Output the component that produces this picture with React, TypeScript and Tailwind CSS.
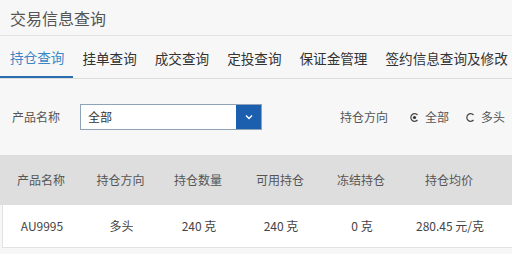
const tabs = ['持仓查询', '挂单查询', '成交查询', '定投查询', '保证金管理', '签约信息查询及修改'];

const cols = [
  { label: '产品名称', w: 'w-[82px]' },
  { label: '持仓方向', w: 'w-[77px]' },
  { label: '持仓数量', w: 'w-[78px]' },
  { label: '可用持仓', w: 'w-[86px]' },
  { label: '冻结持仓', w: 'w-[76px]' },
  { label: '持仓均价', w: 'w-[100px]' },
];

const row = ['AU9995', '多头', '240 克', '240 克', '0 克', '280.45 元/克'];

function Radio({ checked }: { checked?: boolean }) {
  return (
    <svg width="9" height="9" viewBox="0 0 9 9" className="shrink-0">
      <path d="M7.5 2 A3.8 3.8 0 1 0 7.5 7" fill="none" stroke="#444" strokeWidth="1.2" />
      {checked && <circle cx="4.5" cy="4.5" r="1.6" fill="#333" />}
    </svg>
  );
}

export default function App() {
  return (
    <div className="h-[254px] w-[512px] overflow-hidden bg-[#f7f7f7] font-['Noto_Sans_CJK_SC','Noto_Sans',sans-serif] text-[#555]">
      <div className="flex h-[36px] items-center border-b border-[#e3e3e3] pl-[10px] text-[16px] text-[#555]">
        交易信息查询
      </div>

      <div className="flex h-[43px] border-b border-[#dcdcdc]">
        {tabs.map((t, i) => (
          <div
            key={t}
            className={
              i === 0
                ? 'flex shrink-0 items-center whitespace-nowrap border-b-2 border-[#2a6db0] pl-[10px] pr-[9px] pt-[2px] text-[13.6px] text-[#3a86c8]'
                : 'flex shrink-0 items-center whitespace-nowrap px-[9px] pt-[2px] text-[13.6px] text-[#333]'
            }
          >
            {t}
          </div>
        ))}
      </div>

      <div className="mt-[25px] flex h-[26px] items-center text-[12px]">
        <span className="ml-[12px] w-[68px]">产品名称</span>
        <div className="flex h-[26px] w-[182px] border border-[#8ea2b8] bg-white">
          <span className="flex flex-1 items-center pl-[7px] text-[12px] text-[#333]">全部</span>
          <span className="flex w-[25px] items-center justify-center bg-[#1b5fae]">
            <svg width="8" height="6" viewBox="0 0 8 6">
              <path d="M1 1.5 L4 4.5 L7 1.5" fill="none" stroke="#fff" strokeWidth="1.4" />
            </svg>
          </span>
        </div>
        <span className="ml-[78px]">持仓方向</span>
        <span className="ml-[22px] flex items-center gap-[6px]">
          <Radio checked />
          全部
        </span>
        <span className="ml-[17px] flex items-center gap-[6px]">
          <Radio />
          多头
        </span>
      </div>

      <div className="mt-[25px] flex h-[50px] items-center bg-[#dedede] text-[12px] text-[#555]">
        {cols.map((c) => (
          <div key={c.label} className={`${c.w} text-center`}>
            {c.label}
          </div>
        ))}
      </div>
      <div className="ml-[2px] flex h-[43px] items-center border-b border-l border-[#e2e2e2] bg-white text-[12px] text-[#444]">
        {row.map((v, i) => (
          <div key={i} className={`${cols[i].w} text-center ${i === 0 ? '-ml-[2px]' : ''}`}>
            {v}
          </div>
        ))}
      </div>
    </div>
  );
}
